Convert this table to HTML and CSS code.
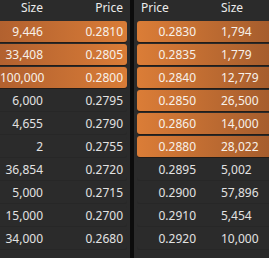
FILE: index.html
```html
<!DOCTYPE html>
<html>
<head>
<meta charset="utf-8">
<link rel="stylesheet" href="styles.css">
</head>
<body>
<div class="book">
  <div class="side bids">
    <div class="head"><span class="c-size">Size</span><span class="c-price">Price</span></div>
    <div class="row hl"><span class="c-size">9,446</span><span class="c-price">0.2810</span></div>
    <div class="row hl"><span class="c-size">33,408</span><span class="c-price">0.2805</span></div>
    <div class="row hl"><span class="c-size">100,000</span><span class="c-price">0.2800</span></div>
    <div class="row"><span class="c-size">6,000</span><span class="c-price">0.2795</span></div>
    <div class="row"><span class="c-size">4,655</span><span class="c-price">0.2790</span></div>
    <div class="row"><span class="c-size">2</span><span class="c-price">0.2755</span></div>
    <div class="row"><span class="c-size">36,854</span><span class="c-price">0.2720</span></div>
    <div class="row"><span class="c-size">5,000</span><span class="c-price">0.2715</span></div>
    <div class="row"><span class="c-size">15,000</span><span class="c-price">0.2700</span></div>
    <div class="row"><span class="c-size">34,000</span><span class="c-price">0.2680</span></div>
  </div>
  <div class="divider"></div>
  <div class="side asks">
    <div class="head"><span class="c-price">Price</span><span class="c-size">Size</span></div>
    <div class="row hl"><span class="c-price">0.2830</span><span class="c-size">1,794</span></div>
    <div class="row hl"><span class="c-price">0.2835</span><span class="c-size">1,779</span></div>
    <div class="row hl"><span class="c-price">0.2840</span><span class="c-size">12,779</span></div>
    <div class="row hl"><span class="c-price">0.2850</span><span class="c-size">26,500</span></div>
    <div class="row hl"><span class="c-price">0.2860</span><span class="c-size">14,000</span></div>
    <div class="row hl"><span class="c-price">0.2880</span><span class="c-size">28,022</span></div>
    <div class="row"><span class="c-price">0.2895</span><span class="c-size">5,002</span></div>
    <div class="row"><span class="c-price">0.2900</span><span class="c-size">57,896</span></div>
    <div class="row"><span class="c-price">0.2910</span><span class="c-size">5,454</span></div>
    <div class="row"><span class="c-price">0.2920</span><span class="c-size">10,000</span></div>
  </div>
</div>
</body>
</html>
```
FILE: styles.css
```css
html, body {
  margin: 0;
  padding: 0;
  background: #2b2b2b;
  overflow: hidden;
}
body {
  font-family: "Noto Sans", "Open Sans", sans-serif;
  font-size: 12px;
  line-height: 16px;
  color: #e2e2e2;
}
.book {
  display: flex;
  width: 269px;
  height: 258px;
  background: #2b2b2b;
}
.side {
  display: flex;
  flex-direction: column;
}
.bids {
  width: 130px;
  flex: none;
}
.asks {
  flex: 1;
  min-width: 0;
}
.divider {
  width: 4px;
  flex: none;
  background: #0c0c0c;
}
.head {
  height: 21px;
  display: flex;
  align-items: flex-start;
  color: #ececec;
  white-space: nowrap;
}
.row {
  height: 21px;
  margin-bottom: 2px;
  display: flex;
  align-items: center;
  white-space: nowrap;
  box-shadow: 0 1px 0 #272727;
}
.row.hl {
  color: #f7f1ea;
  box-shadow: 0 1px 0 #231c17;
}
.bids .row {
  margin-right: 3px;
  border-radius: 0 3px 3px 0;
}
.bids .row.hl {
  background: linear-gradient(to right, #b2612f, #d97c37);
}
.asks .row {
  margin-left: 3px;
  padding-left: 4px;
  border-radius: 3px 0 0 3px;
}
.asks .row.hl {
  background: linear-gradient(to right, #db7d37, #a65d2d);
}
.bids .c-size {
  width: 43px;
  flex: none;
  text-align: right;
}
.bids .c-price {
  width: 80px;
  flex: none;
  text-align: right;
}
.asks .head {
  padding-left: 7px;
}
.asks .c-price {
  width: 55px;
  flex: none;
  text-align: right;
}
.asks .head .c-price {
  text-align: left;
}
.asks .c-size {
  margin-left: 25px;
}
```
